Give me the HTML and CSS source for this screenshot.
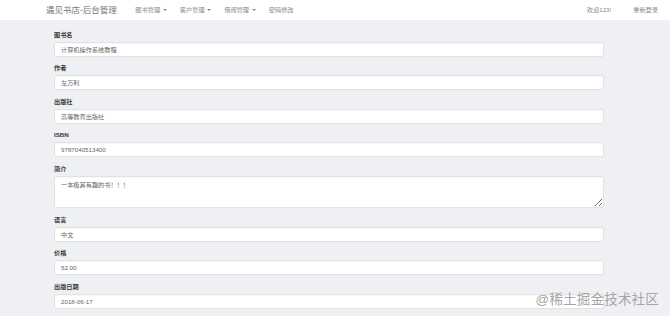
FILE: index.html
```html
<!DOCTYPE html>
<html lang="zh-CN">
<head>
<meta charset="UTF-8" />
<meta name="viewport" content="width=device-width, initial-scale=1" />
<title>遇见书店-后台管理</title>
<link rel="stylesheet" href="styles.css">
</head>
<body>

<nav class="navbar">
  <a class="brand" href="#">遇见书店-后台管理</a>
  <ul class="nav">
    <li><a href="#">图书管理 <span class="caret"></span></a></li>
    <li><a href="#">客户管理 <span class="caret"></span></a></li>
    <li><a href="#">借阅管理 <span class="caret"></span></a></li>
    <li><a href="#">密码修改</a></li>
  </ul>
  <ul class="nav nav-right">
    <li><a href="#">欢迎123!</a></li>
    <li><a href="#">重新登录</a></li>
  </ul>
</nav>

<div class="container">
  <form class="book-form">
    <div class="group">
      <label for="name">图书名</label>
      <input id="name" type="text" value="计算机操作系统教程" />
    </div>
    <div class="group">
      <label for="author">作者</label>
      <input id="author" type="text" value="左万利" />
    </div>
    <div class="group">
      <label for="publisher">出版社</label>
      <input id="publisher" type="text" value="高等教育出版社" />
    </div>
    <div class="group">
      <label for="isbn">ISBN</label>
      <input id="isbn" type="text" value="9787040513400" />
    </div>
    <div class="group">
      <label for="intro">简介</label>
      <textarea id="intro">一本极其有趣的书！！！</textarea>
    </div>
    <div class="group">
      <label for="lang">语言</label>
      <input id="lang" type="text" value="中文" />
    </div>
    <div class="group">
      <label for="price">价格</label>
      <input id="price" type="text" value="52.00" />
    </div>
    <div class="group">
      <label for="pubdate">出版日期</label>
      <input id="pubdate" type="text" value="2018-06-17" />
    </div>
  </form>
</div>

<div class="watermark">@稀土掘金技术社区</div>

</body>
</html>
```

FILE: styles.css
```css
body {
  margin: 0;
  font-family: "Liberation Sans", "Noto Sans CJK SC", sans-serif;
  background: #eff0f3;
  color: #333;
  height: 316px;
  overflow: hidden;
}

/* top bar */
.navbar {
  height: 20px;
  background: #fff;
  display: flex;
  align-items: center;
  padding: 0 1px 0 46px;
}

.brand {
  font-size: 8.5px;
  color: #777;
  text-decoration: none;
  margin-right: 12px;
  line-height: 20px;
}

.nav {
  list-style: none;
  margin: 0;
  padding: 0;
  display: flex;
}

.nav li a {
  display: block;
  padding: 0 6.5px;
  font-size: 6.2px;
  line-height: 20px;
  color: #888;
  text-decoration: none;
}

.nav-right {
  margin-left: auto;
}

.nav-right li a {
  padding: 0 11px;
}

.caret {
  display: inline-block;
  width: 0;
  height: 0;
  margin-left: 1px;
  vertical-align: middle;
  border-top: 2px solid #888;
  border-left: 2px solid transparent;
  border-right: 2px solid transparent;
}

/* form */
.container {
  width: 550px;
  margin-left: 54px;
  padding-top: 9.5px;
}

.group {
  margin-bottom: 6.5px;
}

label {
  display: block;
  font-size: 6.2px;
  font-weight: 700;
  line-height: 10px;
  margin-bottom: 2px;
  color: #3a3a3a;
}

input,
textarea {
  display: block;
  box-sizing: border-box;
  width: 100%;
  height: 15px;
  margin: 0;
  padding: 0 6px;
  font-family: "Liberation Sans", "Noto Sans CJK SC", sans-serif;
  font-size: 6.2px;
  color: #666;
  background: #fff;
  border: 1px solid #e2e2e4;
  border-radius: 2px;
  box-shadow: inset 0 1px 1px rgba(0, 0, 0, 0.03);
}

textarea {
  height: 32.5px;
  padding: 3px 6px;
  line-height: 9px;
  resize: vertical;
}

.watermark {
  position: absolute;
  right: 11px;
  bottom: 8px;
  font-size: 13.5px;
  color: #a5a5a5;
  letter-spacing: 0.2px;
}
```
